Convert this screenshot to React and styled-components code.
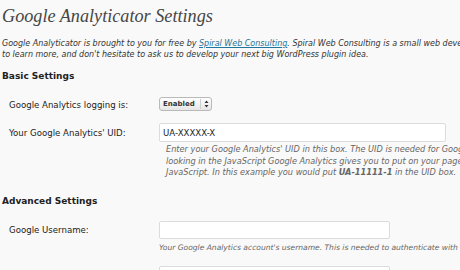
import React from 'react';
import styled, { createGlobalStyle } from 'styled-components';

const GlobalStyle = createGlobalStyle`
  html, body {
    margin: 0;
    padding: 0;
    background: #f9f9f9;
  }
  body {
    font-family: 'DejaVu Sans', Verdana, sans-serif;
    color: #333;
  }
`;

const Wrap = styled.div`
  width: 460px;
  height: 270px;
  overflow: hidden;
  padding-left: 2px;
  box-sizing: border-box;
  white-space: nowrap;
`;

const Title = styled.h2`
  margin: 4px 0 0;
  font-family: 'Liberation Serif', 'Times New Roman', serif;
  font-style: italic;
  font-weight: normal;
  font-size: 18.2px;
  line-height: 24px;
  color: #464646;
`;

const Intro = styled.p`
  margin: 10px 0 0;
  font-size: 8px;
  line-height: 11px;
  font-style: italic;
  color: #333;
`;

const Link = styled.a`
  color: #21759b;
  text-decoration: underline;
`;

const Heading = styled.h3`
  margin: ${p => p.$top}px 0 0;
  font-size: 9px;
  line-height: 12px;
  font-weight: bold;
  color: #222;
`;

const Row = styled.div`
  display: grid;
  grid-template-columns: 157px 1fr;
  align-items: center;
  margin-top: ${p => p.$top}px;
`;

const Label = styled.label`
  padding-left: 7px;
  padding-top: ${p => p.$shift || 0}px;
  font-size: 8.6px;
  line-height: 12px;
  color: #222;
`;

const Select = styled.div`
  display: flex;
  align-items: center;
  width: 53px;
  height: 14px;
  box-sizing: border-box;
  border: 1px solid #b9b9b9;
  border-radius: 3px;
  background: linear-gradient(#ffffff, #e6e6e6);
  font-size: 7px;
  font-weight: bold;
  color: #333;
`;

const SelectText = styled.span`
  flex: 1;
  padding-left: 3px;
`;

const SelectArrows = styled.span`
  display: flex;
  align-items: center;
  justify-content: center;
  width: 10px;
  height: 10px;
  border-left: 1px solid #cfcfcf;
`;

const Input = styled.div`
  width: ${p => p.$width}px;
  height: ${p => p.$height}px;
  box-sizing: border-box;
  border: 1px solid #dcdcdc;
  border-radius: 2px;
  background: #fff;
  padding-left: 3px;
  display: flex;
  align-items: center;
  font-size: 8.6px;
  color: #222;
`;

const Desc = styled.p`
  margin: ${p => p.$top}px 0 0 ${p => p.$indent || 0}px;
  font-size: ${p => p.$size}px;
  line-height: 11.5px;
  font-style: italic;
  color: #666;
  grid-column: 2;
`;

const Code = styled.strong`
  font-weight: bold;
`;

const Arrows = () => (
  <svg width="5" height="8" viewBox="0 0 5 8">
    <path d="M2.5 0.5 L4.5 3 L0.5 3 Z" fill="#333" />
    <path d="M2.5 7.5 L4.5 5 L0.5 5 Z" fill="#333" />
  </svg>
);

export default function App() {
  return (
    <>
      <GlobalStyle />
      <Wrap>
        <Title>Google Analyticator Settings</Title>
        <Intro>
          Google Analyticator is brought to you for free by <Link href="#">Spiral Web Consulting</Link>. Spiral Web
          Consulting is a small web development firm specializing in WordPress development. Visit our website
          <br />
          to learn more, and don't hesitate to ask us to develop your next big WordPress plugin idea.
        </Intro>

        <Heading $top={10}>Basic Settings</Heading>
        <Row $top={14}>
          <Label $shift={3}>Google Analytics logging is:</Label>
          <Select>
            <SelectText>Enabled</SelectText>
            <SelectArrows>
              <Arrows />
            </SelectArrows>
          </Select>
        </Row>
        <Row $top={12}>
          <Label>Your Google Analytics' UID:</Label>
          <Input $width={287} $height={19}>UA-XXXXX-X</Input>
          <Desc $top={2} $indent={7} $size={8.2}>
            Enter your Google Analytics' UID in this box. The UID is needed for Google Analytics to log your website stats. Your UID can be found by
            <br />
            looking in the JavaScript Google Analytics gives you to put on your page. Look for your UID in between <Code>_uacct = "UA-11111-1";</Code> in the
            <br />
            JavaScript. In this example you would put <Code>UA-11111-1</Code> in the UID box.
          </Desc>
        </Row>

        <Heading $top={16}>Advanced Settings</Heading>
        <Row $top={14}>
          <Label>Google Username:</Label>
          <Input $width={231} $height={18} />
          <Desc $top={3} $size={7.55}>
            Your Google Analytics account's username. This is needed to authenticate with Google for use with the admin dashboard widget.
          </Desc>
        </Row>
        <Row $top={13}>
          <Label>Google Password:</Label>
          <Input $width={231} $height={18} />
        </Row>
      </Wrap>
    </>
  );
}
